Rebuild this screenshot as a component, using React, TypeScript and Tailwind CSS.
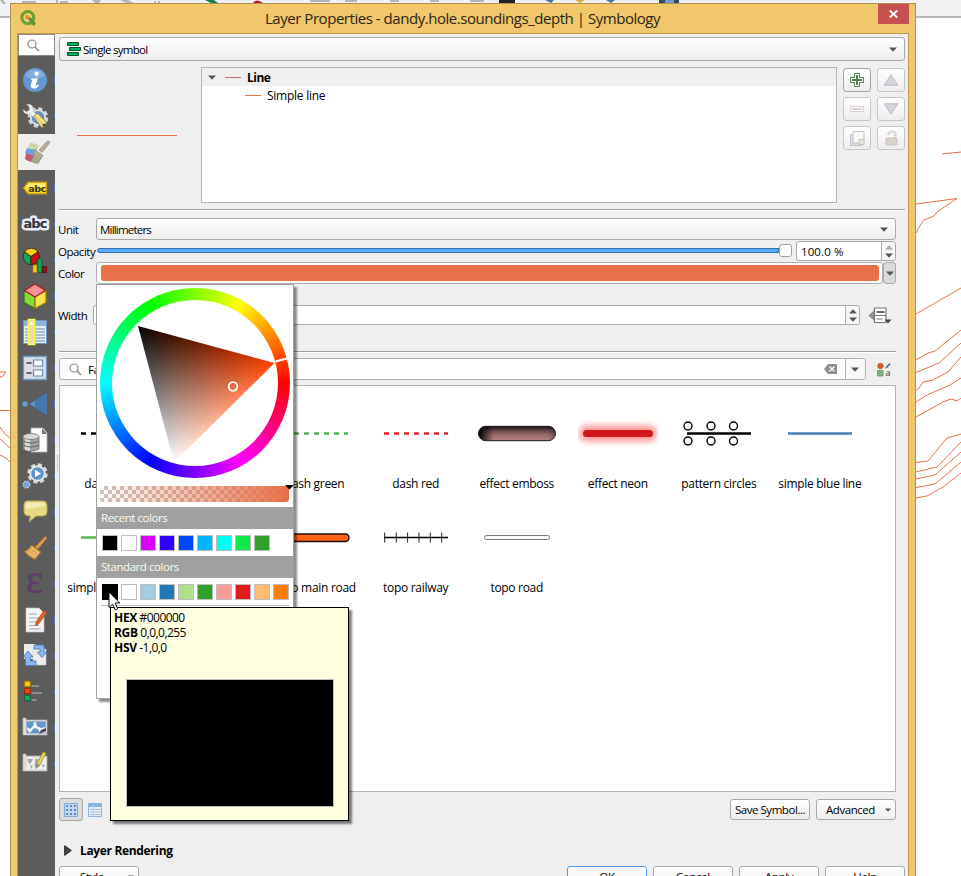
import React from "react";

const OUTLINE = "#e77148";

/* ---------- small shared pieces ---------- */

function Down({ color = "#555", w = 8 }: { color?: string; w?: number }) {
  return (
    <svg width={w} height={w / 2 + 1} viewBox="0 0 8 5" className="block shrink-0">
      <path d="M0 .5h8L4 4.8z" fill={color} />
    </svg>
  );
}

function Up({ color = "#555" }: { color?: string }) {
  return (
    <svg width="8" height="5" viewBox="0 0 8 5" className="block shrink-0">
      <path d="M0 4.500h8L4 .2z" fill={color} />
    </svg>
  );
}

function Magnifier() {
  return (
    <svg width="13" height="13" viewBox="0 0 13 13" fill="none" stroke="#8a8a8a" className="block shrink-0">
      <circle cx="5" cy="5" r="4" strokeWidth="1.2" />
      <path d="M8 8l4 4" strokeWidth="1.7" />
    </svg>
  );
}

function Rule() {
  return <div className="h-[2px] shrink-0 border-b border-white bg-[#a0a0a0]" />;
}

function ToolButton({ children, dim }: { children: React.ReactNode; dim?: boolean }) {
  return (
    <div
      className={
        "flex h-6 w-7 items-center justify-center rounded-[3px] border bg-linear-to-b from-white to-[#ededed] " +
        (dim ? "border-[#c6c6c6]" : "border-[#a4a4a4]")
      }
    >
      {children}
    </div>
  );
}

/* ---------- sidebar icons, 26 x 26 ---------- */

const sideIcons: React.ReactNode[] = [
  <g key="info">
    <circle cx="13" cy="13" r="12" fill="#6397cf" />
    <path d="M3 9a11 11 0 0 1 20 0q-10 6-20 0z" fill="#83aedb" />
    <circle cx="14.6" cy="6.8" r="2.2" fill="#fff" />
    <path d="M9.500 11.500h6.300l-2.300 7.300q1.500.2 2.500-1.600l1 .7q-2 4-5.600 3.600-3.400-.4-2.600-3.400l1.500-5H9z" fill="#fff" />
  </g>,
  <g key="wrench">
    <circle cx="16" cy="14.500" r="9" fill="none" stroke="#d6d6d6" strokeWidth="2.600" strokeDasharray="4.200 2.870" />
    <circle cx="16" cy="14.500" r="7.300" fill="#5f93c9" stroke="#e2e2e2" strokeWidth="1.800" />
    <path d="M4.500 1.500q6-1.500 7 4.500l-.5 2 5 4.500-3 3-5.500-4.500Q2 12 1 6.500l3.500 2.300 3-1.800-.5-3.500z" fill="#f0f0f0" stroke="#aaa" strokeWidth=".5" />
    <path d="M11.500 13.500l4-3.500 9 9.500-2 4-3 1z" fill="#f3e08a" stroke="#8d8146" strokeWidth="1" />
    <path d="M13.500 13.500l8 8.500" stroke="#c9b75a" strokeWidth="1" />
    <circle cx="22" cy="22" r="1.600" fill="#55502f" />
  </g>,
  <g key="brush">
    <path d="M8 3.500l9 2.500-2 5-9-2.500z" fill="#c8d8a0" />
    <path d="M5 9l10 2-2 6-10-3z" fill="#6ba3e3" />
    <path d="M4 14l9 3-1 6q-6 0-9-3z" fill="#c05a78" />
    <path d="M17 11L25 2.500q1.500-1 2.200 0t0 2L20 13.500z" fill="#b3ac98" stroke="#958e7a" strokeWidth=".7" />
    <path d="M12.500 10.500l8.500 6-5 8q-4 0-7-2.500 4-5 3.500-11.500z" fill="#b5ae9a" stroke="#938c78" strokeWidth=".7" />
    <path d="M13 16l-2 6.500M15.500 17.500l-2 6M18.500 18.500l-2.500 5" stroke="#938c78" strokeWidth=".8" />
  </g>,
  <g key="label">
    <path d="M1.500 13L6 7.200h18.500v11.600H6z" fill="#f6dc2c" stroke="#c79c08" strokeWidth="1.200" />
    <path d="M6.500 8.200h17v4h-19z" fill="#fcf08a" opacity=".7" />
    <text x="15" y="16.500" textAnchor="middle" fontSize="9.500" fontWeight="700" fontFamily="DejaVu Sans, sans-serif" letterSpacing="-.5" fill="#3b3630">abc</text>
  </g>,
  <g key="mask">
    <text x="13" y="17" textAnchor="middle" fontSize="13" fontWeight="700" fontFamily="DejaVu Sans, sans-serif" letterSpacing="-.9" fill="#2f3238" stroke="#e9ecfa" strokeWidth="5" strokeLinejoin="round" paintOrder="stroke">abc</text>
  </g>,
  <g key="diagram" stroke="#3a1d10" strokeWidth=".8" transform="translate(0 1)">
    <path d="M9 8.500L2.500 4A8 8 0 0 1 16 4z" fill="#f8d012" />
    <path d="M9 8.500L2.500 4A8 8 0 0 0 9 16.500z" fill="#0fa65a" />
    <path d="M9 8.500L16 4A8 8 0 0 1 9 16.500z" fill="#c41212" />
    <path d="M11 17h4v7.500h-4z" fill="#fbc51c" stroke="#b47a10" />
    <path d="M15.800 11h4v13.500h-4z" fill="#0fa65a" stroke="#075f35" />
    <path d="M20.600 18.500h4v6h-4z" fill="#a01010" stroke="#5a0505" />
  </g>,
  <g key="cube" strokeLinejoin="round" strokeWidth="1.300">
    <path d="M13 13.500v12L2 19.500V7.500z" fill="#87dc36" stroke="#3a7512" />
    <path d="M13 13.500v12l11-6V7.500z" fill="#f7e44a" stroke="#9a7f10" />
    <path d="M13 1l10.500 6.500L13 14 2.500 7.500z" fill="#f59393" stroke="#b01a22" />
  </g>,
  <g key="fields">
    <path d="M1.500 1.500h23v23h-23z" fill="#e3eef7" stroke="#6a99c6" />
    <path d="M2 2h22v5H2z" fill="#8db5da" />
    <path d="M3 10h20M3 13h20M3 16h20M3 19h20M3 22h20" stroke="#6b91b8" />
    <path d="M6.500 .5h6v25h-6z" fill="#e8dfa5" stroke="#fdf246" strokeWidth="1.700" />
    <circle cx="9.500" cy="4.500" r="1.400" fill="#fff" />
  </g>,
  <g key="form">
    <path d="M1.500 1.500h23v23h-23z" fill="#dcdfe4" stroke="#7398c4" strokeWidth="1.300" />
    <path d="M11.500 5h9v6h-9zM11.500 15h9v6h-9z" fill="#fff" stroke="#5f8abb" strokeWidth="1.200" />
    <path d="M4.500 8h5M4.500 18h5" stroke="#5d6570" strokeWidth="2" />
  </g>,
  <g key="join">
    <circle cx="3" cy="13" r="2.800" fill="#6b9bcf" />
    <path d="M7.500 13L25 2v22z" fill="#5f94cb" />
    <path d="M13 9.500L25 2v22l-12-7.500z" fill="#3a6ca4" opacity=".7" />
  </g>,
  <g key="aux">
    <path d="M9 1h12l4 5v19H9z" fill="#fbfbfb" stroke="#b5b5b5" strokeWidth=".8" />
    <path d="M20 1v6h5z" fill="#777" />
    <path d="M1 10v12q8 4 16 0V10z" fill="#a2a2a2" stroke="#6e6e6e" strokeWidth=".8" />
    <path d="M3 11v12q3 1 5 1V11z" fill="#dcdcdc" />
    <ellipse cx="9" cy="9.500" rx="8" ry="3" fill="#dadada" stroke="#777" strokeWidth=".8" />
    <path d="M1 14q8 4 16 0M1 18q8 4 16 0" fill="none" stroke="#666" />
  </g>,
  <g key="actions">
    <circle cx="15.500" cy="10.500" r="9" fill="none" stroke="#dadada" strokeWidth="2.500" strokeDasharray="4.200 2.870" />
    <circle cx="15.500" cy="10.500" r="7.300" fill="#5f93c9" stroke="#e8e8e8" strokeWidth="2" />
    <path d="M13 6.800v7.400l6-3.700z" fill="#fff" />
    <circle cx="4.500" cy="21.500" r="3.300" fill="#6ea6d8" stroke="#b7c9da" strokeWidth="1.400" strokeDasharray="1.700 .9" />
  </g>,
  <g key="display" transform="translate(0 -1)">
    <path d="M5 3h16q4 0 4 4v7q0 4-4 4h-7l-7 6 1.500-6Q2 18 2 14V7q0-4 3-4z" fill="#e6db86" stroke="#b7aa4d" />
    <path d="M5.500 4.500h15q3 0 3 3l-18 3.500-2-1V7q0-2.500 2-2.500z" fill="#f3ecb5" />
  </g>,
  <g key="rendering">
    <path d="M13 12.500L22.500 2q1.500-1 2 0t0 1.500L16 14z" fill="#e0a04a" stroke="#b37421" strokeWidth=".8" />
    <path d="M9.500 10l9.500 7-6 7.500Q6 22 2.500 16.500q5-2 7-6.500z" fill="#dfa355" stroke="#ad7326" strokeWidth=".9" />
    <path d="M6 17l7 5M8 15l7 5.500M10 13l7 5.500" stroke="#f2cf91" strokeWidth="1" />
  </g>,
  <g key="variables">
    <text x="12.500" y="21.500" textAnchor="middle" fontSize="40" fontFamily="Liberation Serif, serif" fill="#613c6b" stroke="#613c6b" strokeWidth=".7">ε</text>
  </g>,
  <g key="metadata">
    <path d="M4 1h13l5 5v19H4z" fill="#f4f4f4" stroke="#bdbdbd" strokeWidth=".7" />
    <path d="M7 7h8M7 11h10M7 15h9M7 18.500h10M7 22h12" stroke="#a9a9a9" />
    <path d="M22 3.500l3 2-8.500 11.500-3 1.500.8-4z" fill="#e0622a" stroke="#a34318" strokeWidth=".7" />
  </g>,
  <g key="dependencies">
    <path d="M2 1h11l3 3v12H2z" fill="#ececec" />
    <path d="M11 6h13v16H11z" fill="#ececec" stroke="#c9c9c9" strokeWidth=".6" />
    <path d="M12 2h10v7h3l-5 5.500-5-5.500h3V6h-6z" fill="#8db5f0" stroke="#4a78c0" strokeWidth=".8" />
    <path d="M6 8l5 6H8.500v4H14v4.500H3.500V14H1z" fill="#8db5f0" stroke="#4a78c0" strokeWidth=".8" />
  </g>,
  <g key="legend" transform="translate(0 -1)">
    <path d="M2.700 3.200h5.500v5.500H2.700z" fill="#fbd006" stroke="#a87a00" />
    <path d="M2.700 10.200h5.500v5.500H2.700z" fill="#f24a0c" stroke="#8f2500" />
    <path d="M2.700 17.200h5.500v5.500H2.700z" fill="#0fb05a" stroke="#075f2f" />
    <path d="M9.500 8h7.500M9.500 15h10.500M9.500 22h5" stroke="#9a9a9a" strokeWidth="1.600" />
  </g>,
  <g key="server" transform="translate(0 -1)">
    <path d="M1 4h3v2h21v15H1z" fill="#dedede" stroke="#b5b5b5" strokeWidth=".7" />
    <path d="M4.500 7.500H23.500v11.500H4.500z" fill="#f2f2f2" stroke="#8aa0b5" strokeWidth=".8" />
    <path d="M5 8h7l-1 4-3 3-3-2zM14 8h9v5l-4 1-4-2zM8 19l4-5 4 1 2 4zM5 15l2 4H5z" fill="#5f97cf" />
    <path d="M17 20l2-4 5-2v3z" fill="#4a4a4a" />
  </g>,
  <g key="digitizing" transform="translate(0 -1)">
    <path d="M1 4h3v2h21v15H1z" fill="#dedede" stroke="#b5b5b5" strokeWidth=".7" />
    <path d="M5 7.500h19v12H5z" fill="#efefef" />
    <path d="M5 9h6l-2 4-2 1zM13 9h4l-2 4 2 4-4-3zM20 14l3 1-2 3zM8 15l3 1-2 3z" fill="#a8a8a8" />
    <path d="M21 2l3 1-6.500 12.500-3 2 .7-4z" fill="#eadb57" stroke="#93882d" strokeWidth=".8" />
    <path d="M12 14l6 .5-4 5z" fill="#777" opacity=".6" />
  </g>,
];

function Sidebar() {
  return (
    <div className="flex w-[37px] shrink-0 flex-col bg-[#5c5c5c]">
      <div className="flex h-[22px] items-center border border-[#8b8b8b] bg-white pl-2">
        <Magnifier />
      </div>
      <div className="mt-[6px] flex flex-col">
        {sideIcons.map((icon, i) => (
          <div key={i} className={"flex h-9 items-center justify-between pl-1 " + (i === 2 ? "bg-[#efefef]" : "")}>
            <svg width="26" height="26" viewBox="0 0 26 26" className="block shrink-0 overflow-visible">
              {icon}
            </svg>
            {i !== 2 && <div className={"w-px bg-[#5376bd] " + (i % 3 === 0 ? "h-2" : "h-1")} />}
          </div>
        ))}
      </div>
    </div>
  );
}

/* ---------- symbol picker ---------- */

const symbols: { name: string; art: React.ReactNode }[] = [
  { name: "dash black", art: <path d="M8 40.500h64" stroke="#000" strokeWidth="2.600" strokeDasharray="5 5" /> },
  { name: "", art: null },
  { name: "dash green", art: <path d="M9 40.500h64" stroke="#4daf4a" strokeWidth="2.600" strokeDasharray="5 5" /> },
  { name: "dash red", art: <path d="M8 40.500h64" stroke="#e0222b" strokeWidth="2.600" strokeDasharray="5 5" /> },
  {
    name: "effect emboss",
    art: (
      <>
        <defs>
          <linearGradient id="em" x2="0" y2="1">
            <stop offset="0" stopColor="#140b0d" />
            <stop offset=".25" stopColor="#5a3f41" />
            <stop offset=".55" stopColor="#94696a" />
            <stop offset="1" stopColor="#b58182" />
          </linearGradient>
          <linearGradient id="em2">
            <stop offset="0" stopColor="#000" />
            <stop offset=".2" stopColor="#000" stopOpacity="0" />
            <stop offset=".9" stopColor="#000" stopOpacity="0" />
            <stop offset="1" stopColor="#000" stopOpacity=".3" />
          </linearGradient>
        </defs>
        <rect x="1.500" y="33.300" width="77" height="14.400" rx="7.200" fill="url(#em)" />
        <rect x="1.500" y="33.300" width="77" height="14.400" rx="7.200" fill="url(#em2)" stroke="#1c1c1c" />
      </>
    ),
  },
  {
    name: "effect neon",
    art: (
      <>
        <rect x="1" y="32.500" width="78" height="16" rx="8" fill="#ff2a2a" opacity=".5" className="blur-[3px]" />
        <rect x="5" y="37" width="70" height="7" rx="3.500" fill="#d0181b" />
      </>
    ),
  },
  {
    name: "pattern circles",
    art: (
      <g stroke="#000" fill="#fff">
        <path d="M8 40.500h64" strokeWidth="2.600" />
        {[9, 32, 54.500].map((x) => (
          <g key={x} strokeWidth="1.400">
            <circle cx={x} cy="33" r="4" />
            <circle cx={x} cy="48" r="4" />
          </g>
        ))}
      </g>
    ),
  },
  { name: "simple blue line", art: <path d="M8 40.500h64" stroke="#4a7fbb" strokeWidth="2.600" /> },
  { name: "simple green line", art: <path d="M8 40.500h64" stroke="#5bb353" strokeWidth="2.600" /> },
  { name: "", art: null },
  { name: "topo main road", art: <rect x="3" y="37" width="71" height="7.500" rx="3.700" fill="#ff6314" stroke="#1c0f08" strokeWidth="1.400" /> },
  {
    name: "topo railway",
    art: (
      <g stroke="#222">
        <path d="M8 40.500h64" strokeWidth="1.600" stroke="#000" />
        <path d="M8.700 35.500v10M20.300 35.500v10M31.600 35.500v10M43 35.500v10M54.300 35.500v10M65.700 35.500v10" />
      </g>
    ),
  },
  { name: "topo road", art: <rect x="7.500" y="38.500" width="65" height="4" rx="1.800" fill="#fff" stroke="#777" /> },
];

function SymbolList() {
  return (
    <div className="mt-[5px] h-[407px] shrink-0 border border-[#b4b4b4] bg-white pt-[7px] pl-[2px]">
      <div className="grid grid-cols-[repeat(8,101.05px)] text-[12px] tracking-[-0.3px]">
        {symbols.map((s, i) => (
          <div key={i} className="flex h-[104px] flex-col items-center">
            <svg width="80" height="80" viewBox="0 0 80 80" className="block shrink-0">
              {s.art}
            </svg>
            <span className="mt-[3px] leading-4 whitespace-nowrap">{s.name}</span>
          </div>
        ))}
      </div>
    </div>
  );
}

/* ---------- colour menu ---------- */

type P = [number, number];
const HUE: P = [177.5, 78];
const BLACK: P = [41, 41];
const WHITE: P = [77, 177.5];

/* Foot of the perpendicular from p on the edge a-b. */
function foot(p: P, a: P, b: P): P {
  const dx = b[0] - a[0];
  const dy = b[1] - a[1];
  const t = ((p[0] - a[0]) * dx + (p[1] - a[1]) * dy) / (dx * dx + dy * dy);
  return [a[0] + t * dx, a[1] + t * dy];
}

function Wheel() {
  const h = foot(HUE, BLACK, WHITE);
  const w = foot(WHITE, BLACK, HUE);
  const pts = [HUE, BLACK, WHITE].map((p) => p.join(",")).join(" ");
  return (
    <div className="relative h-[200px] w-[196px] shrink-0">
      <div className="absolute top-[3px] left-[3px] h-[190px] w-[190px] rounded-full bg-[conic-gradient(from_90deg,#f00,#f0f,#00f,#0ff,#0f0,#ff0,#f00)]" />
      <div className="absolute top-[15px] left-[15px] h-[166px] w-[166px] rounded-full bg-white" />
      <svg width="196" height="200" viewBox="0 0 196 200" className="absolute top-0 left-0">
        <defs>
          <clipPath id="tri">
            <polygon points={pts} />
          </clipPath>
          <linearGradient id="gh" gradientUnits="userSpaceOnUse" x1={h[0]} y1={h[1]} x2={HUE[0]} y2={HUE[1]}>
            <stop offset="0" stopColor="#000" />
            <stop offset="1" stopColor="#ff4200" />
          </linearGradient>
          <linearGradient id="gw" gradientUnits="userSpaceOnUse" x1={w[0]} y1={w[1]} x2={WHITE[0]} y2={WHITE[1]}>
            <stop offset="0" stopColor="#000" />
            <stop offset="1" stopColor="#fff" />
          </linearGradient>
        </defs>
        <g clipPath="url(#tri)" className="isolate">
          <rect x="30" y="30" width="155" height="155" fill="url(#gh)" />
          <rect x="30" y="30" width="155" height="155" fill="url(#gw)" className="mix-blend-plus-lighter" />
        </g>
        <path d="M178.500 76.500l12-3.300" stroke="#fff" strokeWidth="2" />
        <circle cx="136" cy="101.500" r="4.300" fill="none" stroke="#fff" strokeWidth="1.800" />
      </svg>
    </div>
  );
}

function Swatches({ colors, active }: { colors: string[]; active?: boolean }) {
  return (
    <div className="flex gap-[3px] pl-[5px]">
      {colors.map((c, i) => (
        <div
          key={c}
          className={"h-4 w-4 border " + (active && i === 0 ? "border-black" : "border-[#bdbdbd]")}
          style={{ backgroundColor: c }}
        />
      ))}
    </div>
  );
}

const menuHeading =
  "h-[22px] shrink-0 bg-[#a0a0a0] pl-1 text-[11.5px] leading-[22px] tracking-[-0.45px] text-[#fcfcf0]";

function ColorMenu() {
  return (
    <div className="absolute top-[284px] left-[96px] flex h-[415px] w-[198px] flex-col border border-[#a0a0a0] bg-white shadow-[3px_3px_2px_rgba(0,0,0,0.45)]">
      <Wheel />
      <div className="relative mt-[1px] ml-[3px] h-4 w-[189px] rounded-[3px] bg-[linear-gradient(90deg,rgba(231,113,72,0),#e77148),repeating-conic-gradient(#cbc3c1_0_25%,#fff_0_50%)] bg-[size:100%_100%,8px_8px]">
        <svg width="9" height="5" viewBox="0 0 9 5" className="absolute -top-px left-[185px]">
          <path d="M0 0h9L4.500 4.500z" fill="#000" />
        </svg>
      </div>
      <div className={menuHeading + " mt-[5px]"}>Recent colors</div>
      <div className="mt-[6px]">
        <Swatches colors={["#000000", "#ffffff", "#d900ff", "#2f00ff", "#0048ff", "#00b7ff", "#00fff0", "#11e846", "#33a02c"]} />
      </div>
      <div className={menuHeading + " mt-[5px]"}>Standard colors</div>
      <div className="mt-[6px]">
        <Swatches active colors={["#000000", "#ffffff", "#a6cee3", "#1f78b4", "#b2df8a", "#33a02c", "#fb9a99", "#e31a1c", "#fdbf6f", "#ff7f00"]} />
      </div>
      <div className="mx-1 mt-[5px] h-px bg-[#c0c0c0]" />
    </div>
  );
}

function ColorTip() {
  const rows = [
    ["HEX", "#000000"],
    ["RGB", "0,0,0,255"],
    ["HSV", "-1,0,0"],
  ];
  return (
    <div className="absolute top-[607px] left-[110px] flex h-[214px] w-[239px] flex-col border border-black bg-[#ffffe1] pt-[2px] text-[12px] tracking-[-0.55px] shadow-[3px_3px_2px_rgba(0,0,0,0.5)]">
      {rows.map(([k, v]) => (
        <div key={k} className="h-[15px] pl-[3px] leading-[15px]">
          <b className="tracking-[-0.3px]">{k}</b> {v}
        </div>
      ))}
      <div className="mt-[24px] ml-[15px] h-[128px] w-[208px] border border-[#bdbdbd] bg-black" />
    </div>
  );
}

/* ---------- form ---------- */

function SymbolTree() {
  return (
    <div className="mt-[6px] flex h-[136px] shrink-0">
      <div className="flex w-[142px] items-center pl-[18px]">
        <div className="h-px w-[100px] bg-[#e77148]" />
      </div>
      <div className="w-[636px] border border-[#b4b4b4] bg-white text-[12px]">
        <div className="flex h-[18px] items-center bg-[#efefef] pl-[6px]">
          <Down />
          <div className="ml-[9px] h-px w-4 bg-[#bb7070]" />
          <b className="mt-[2px] ml-[6px] leading-4 tracking-[-0.5px]">Line</b>
        </div>
        <div className="flex h-[18px] items-center pl-[43px]">
          <div className="h-px w-4 bg-[#e77148]" />
          <span className="mt-[2px] ml-[6px] leading-4 tracking-[-0.25px]">Simple line</span>
        </div>
      </div>
      <div className="ml-[6px] grid content-start gap-x-[6px] gap-y-[5px] pt-px [grid-template-columns:28px_28px]">
        <ToolButton>
          <svg width="14" height="14" viewBox="0 0 14 14">
            <path d="M4.500.500h5v4h4v5h-4v4h-5v-4h-4v-5h4z" fill="#fff" stroke="#4d8050" />
            <path d="M6 2h2v4h4v2H8v4H6V8H2V6h4z" fill="#4d8050" />
          </svg>
        </ToolButton>
        <ToolButton dim>
          <svg width="16" height="12" viewBox="0 0 16 12">
            <path d="M8 .8l6.800 10.400H1.200z" fill="#d3d6da" stroke="#b9bdc1" />
          </svg>
        </ToolButton>
        <ToolButton dim>
          <svg width="14" height="6" viewBox="0 0 14 6">
            <path d="M.5.500h13v5H.5z" fill="#fff" stroke="#dccfcf" />
            <path d="M2 2h10v2H2z" fill="#ddd0d0" />
          </svg>
        </ToolButton>
        <ToolButton dim>
          <svg width="16" height="12" viewBox="0 0 16 12">
            <path d="M8 11.200L14.800.8H1.200z" fill="#d3d6da" stroke="#b9bdc1" />
          </svg>
        </ToolButton>
        <ToolButton dim>
          <svg width="15" height="15" viewBox="0 0 15 15" stroke="#c4c4c4">
            <path d="M.5 3.500h11v11H.5z" fill="#dedede" />
            <path d="M3 .5h11v11.500H3z" fill="#f6f6f6" />
            <path d="M9 8.500h5v5H9z" fill="#e6e3d8" stroke="#c9c7bb" />
          </svg>
        </ToolButton>
        <ToolButton dim>
          <svg width="13" height="16" viewBox="0 0 13 16">
            <path d="M3 4.500Q4 1.500 7 1.500q3.500 0 3.500 3.500v3" fill="none" stroke="#d0d0d0" strokeWidth="2.400" strokeDasharray="2.500 .6" />
            <rect x="1" y="8" width="11" height="7" rx="1.500" fill="#d9d6c9" stroke="#c6c3b5" />
          </svg>
        </ToolButton>
      </div>
    </div>
  );
}

function Spin({ upColor = "#555" }: { upColor?: string }) {
  return (
    <div className="flex w-[14px] flex-col items-center justify-center gap-[3px] rounded-r-[3px] border-l border-[#b0b0b0] bg-[#f6f6f6]">
      <Up color={upColor} />
      <Down />
    </div>
  );
}

const button =
  "flex items-center justify-center rounded-[3px] border border-[#a9a9a9] bg-linear-to-b from-white to-[#ededed] whitespace-nowrap";

function Form() {
  return (
    <div className="flex w-[853px] shrink-0 flex-col bg-[#efefef] pt-[3px] pr-[3px] pl-[4px] text-[12px] text-black">
      <div className={button + " h-6 shrink-0 !justify-start pr-[7px] pl-[7px]"}>
        <svg width="14" height="15" viewBox="0 0 14 15" fill="#00b35a" stroke="#07532d">
          <path d="M.5.500h11v3H.5zM2.500 5.500h11v3h-11zM.5 10.500h11v3H.5z" />
        </svg>
        <span className="ml-[2px] flex-1 pt-px text-[11.5px] tracking-[-0.7px]">Single symbol</span>
        <Down />
      </div>

      <SymbolTree />
      <div className="mt-[6px]"><Rule /></div>

      <div className="mr-[9px] flex flex-col text-[11.5px] tracking-[-0.5px]">
        <div className="mt-[7px] flex h-[22px] items-center">
          <span className="-ml-px w-[38px] pt-0.5">Unit</span>
          <div className={button + " h-[22px] flex-1 !justify-start pr-[7px] pl-[3px]"}>
            <span className="flex-1 pt-0.5 tracking-[-0.8px]">Millimeters</span>
            <Down />
          </div>
        </div>
        <div className="mt-px flex h-5 items-center">
          <span className="-ml-px w-[39px] pt-0.5">Opacity</span>
          <div className="flex w-[695px] items-center">
            <div className="mb-px h-[5px] flex-1 rounded-l-sm border border-[#2a70b4] bg-[#5daaf8]" />
            <div className="mb-px h-[13px] w-[13px] rounded-[3px] border border-[#a0a0a0] bg-white" />
          </div>
          <div className="ml-1 flex h-5 w-[100px] rounded-[3px] border border-[#a9a9a9] bg-white">
            <span className="flex-1 pl-1 leading-[20px] tracking-[0.1px]">100.0 %</span>
            <Spin upColor="#aaa" />
          </div>
        </div>
        <div className="mt-px flex h-[22px] items-center">
          <span className="-ml-px w-[38px] pt-px">Color</span>
          <div className="flex h-[22px] flex-1 rounded-[3px] border border-[#b0b0b0] bg-[#fafafa] py-[2px] pr-[3px] pl-[4px]">
            <div className="flex-1 rounded-[3px] bg-[#e77148]" />
          </div>
          <div className="flex h-[22px] w-[13px] items-center justify-center rounded-[3px] border border-[#a9a9a9] bg-[#dadada]">
            <Down />
          </div>
        </div>
        <div className="mt-[21px] flex h-5 items-center">
          <span className="-ml-px w-[35px] pt-0.5">Width</span>
          <div className="flex h-5 w-[767px] justify-end rounded-[3px] border border-[#a9a9a9] bg-white">
            <Spin />
          </div>
          <svg width="24" height="17" viewBox="0 0 24 17" className="ml-[9px]">
            <path d="M0 8.500L6 3v11z" fill="#8e9297" stroke="#6b6b6b" strokeWidth=".7" />
            <path d="M5.500 1h11.500v14.500H5.500z" fill="#fff" stroke="#777" strokeWidth="1.200" />
            <path d="M7.500 5h8" stroke="#444" strokeWidth="1.600" />
            <path d="M6 8.500h11M7.500 12h6" stroke="#777" />
            <path d="M15.500 12.500h7l-3.500 4z" fill="#444" />
          </svg>
        </div>
        <div className="mt-[26px]"><Rule /></div>
        <div className="mt-[5px] flex h-[22px] items-center">
          <div className="flex h-[22px] w-[807px] items-center rounded-[3px] border border-[#b0b0b0] bg-white">
            <div className="ml-[9px]"><Magnifier /></div>
            <span className="ml-[6px] flex-1 pt-0.5">Favorites</span>
            <svg width="13" height="10" viewBox="0 0 13 10">
              <path d="M0 5l4-5h9v10H4z" fill="#8f8f8f" />
              <path d="M5.500 2.500l5 5M10.500 2.500l-5 5" stroke="#fff" strokeWidth="1.200" />
            </svg>
            <div className="ml-[8px] flex h-5 w-5 items-center justify-center rounded-r-[3px] border-l border-[#b0b0b0] bg-[#f8f8f8] pr-[2px]">
              <Down />
            </div>
          </div>
          <svg width="15" height="15" viewBox="0 0 15 15" className="ml-[10px]">
            <circle cx="4.500" cy="4" r="2.800" fill="#d1622c" stroke="#a9481b" strokeWidth=".6" />
            <path d="M9 6.500l1-2L13.500 1l1.200 1.200L11.200 6z" fill="#4a74a8" />
            <path d="M1.500 8.500H7v5.500H1.500z" fill="#7fb185" stroke="#5a8f62" strokeWidth=".7" />
            <text x="9.500" y="14" fontSize="9" fontFamily="Open Sans, sans-serif" fill="#333">a</text>
          </svg>
        </div>
        <SymbolList />
        <div className="mt-[6px] flex h-[23px] items-center">
          <div className="flex h-[23px] w-6 items-center justify-center rounded-[3px] border border-[#a6a6a6] bg-[#dcdcdc]">
            <svg width="14" height="14" viewBox="0 0 14 14" fill="#5d8cc4">
              <path d="M.5.500h13v13H.5z" fill="#c3d6ec" stroke="#86aad4" />
              {[2, 6, 10].map((y) =>
                [2, 6, 10].map((x) => <rect key={x + "-" + y} x={x} y={y} width="2" height="2" />)
              )}
            </svg>
          </div>
          <svg width="14" height="14" viewBox="0 0 14 14" className="ml-[5px]">
            <path d="M.5.500h13v13H.5z" fill="#e4eff8" stroke="#8fb6da" />
            <path d="M.5.500h13v3.500H.5z" fill="#86b2dc" />
            <path d="M2 6.500h3M6.500 6.500h6M2 9h3M6.500 9h6M2 11.500h3M6.500 11.500h6" stroke="#a9bdd0" />
            <path d="M5.500 1v12" stroke="#b4cfe6" />
          </svg>
          <div className="flex-1" />
          <div className={button + " h-[21px] w-20 pt-px tracking-[-0.45px]"}>Save Symbol...</div>
          <div className={button + " ml-[6px] h-[21px] w-20 !justify-start pt-px pl-[9px] tracking-[-0.45px]"}>
            <span className="flex-1">Advanced</span>
            <span className="mr-1"><Down w={6} /></span>
          </div>
        </div>
      </div>

      <div className="mt-5 flex h-[18px] shrink-0 items-center pl-[5px]">
        <svg width="8" height="11" viewBox="0 0 8 11">
          <path d="M.7.700v9.600L7.300 5.500z" fill="#444" stroke="#222" />
        </svg>
        <b className="ml-2 pt-px tracking-[-0.35px]">Layer Rendering</b>
      </div>
      <div className="mt-[7px] flex shrink-0 gap-[6px] text-[11.5px] tracking-[-0.3px]">
        <div className={button + " h-[22px] w-20 !justify-start pl-5"}>
          <span className="flex-1">Style</span>
          <span className="mr-1"><Down w={6} /></span>
        </div>
        <div className="flex-1" />
        <div className={button + " h-[22px] w-20 !border-[#4d9be8]"}>OK</div>
        <div className={button + " h-[22px] w-20"}>Cancel</div>
        <div className={button + " h-[22px] w-20"}>Apply</div>
        <div className={button + " h-[22px] w-20"}>Help</div>
      </div>
    </div>
  );
}

/* ---------- main window behind the dialog ---------- */

function MapCanvas() {
  return (
    <svg width="961" height="876" viewBox="0 0 961 876" className="absolute top-0 left-0">
      <path d="M0 0h961v16H0z" fill="#f1f1f1" />
      <path d="M0 16h961v2H0z" fill="#b9b9b9" />
      <g fill="#b5b5b5">
        <path d="M0 0h3l3 4H3zM22 1h14v2H22zM56 0h2v3h-2zM60 1h8v2h-8zM92 0h9l-2 3h-4zM120 0h8l6 3h-8zM154 1h2v2h-2zM158 1h2v2h-2z" />
        <path d="M310 0h20v2h-20zM345 0h12v2h-12zM390 0h9v2h-9zM430 0h9v2h-9zM470 0h14v2h-14z" />
      </g>
      <path d="M205 0h9l4 3h-7z" fill="#12844a" />
      <path d="M253 3q4-5 10 0z" fill="#b5202c" />
      <path d="M499 0h16v3h-16z" fill="#222" />
      <path d="M545 0h9l-3 3zM606 0h9l-4 3z" fill="#4673a8" />
      <path d="M575 0h10l-5 3z" fill="#d0b23c" />
      <path d="M659 0h20v3h-20z" fill="#33485f" />
      <path d="M665 0h9v3h-9z" fill="#6d9ad0" />
      <g fill="none" stroke={OUTLINE} strokeWidth="1">
        <path d="M942 154l19-2M916 204l41-5.500-20 13.500-3 4-10 4-3 4-5 9M916 314l45-26" />
        <path d="M916 360l12-7 7-2 26-21M916 372.500l23-9.500 22-20M916 390.500l3-2.500 4-6 10-2 15-8 13-15" />
        <path d="M916 402l11-7 23-10 11-7M916 417l27-15 8-3 6 2 4-3M916 462.500l12-1.500 19-23 14-4" />
        <path d="M916 472l21-5 24-25M916 479l19-4 26-23M916 487.500l19-3.500 26-22M916 498l11-2 16-9 18-14" />
        <path d="M0 372h6l-3 4-3 1M0 410.500h10M0 427l5 7 5 4M0 439l10 9M0 455l6 3 4 4" />
      </g>
    </svg>
  );
}

function Logo() {
  return (
    <svg width="17" height="17" viewBox="0 0 17 17">
      <circle cx="7.800" cy="7.600" r="5.800" fill="none" stroke="#6fa02c" strokeWidth="3.400" />
      <circle cx="7.800" cy="7.600" r="4.300" fill="#f3d28a" />
      <path d="M8 7.600L10.500 7l5.500 6.500-2.500 2.500L8.500 10z" fill="#5a9336" />
      <circle cx="7.300" cy="7.200" r="2.200" fill="#ee8a1d" />
    </svg>
  );
}

export default function App() {
  return (
    <div className="relative h-[876px] w-[961px] overflow-hidden bg-white font-['Open_Sans','Noto_Sans',sans-serif] text-black">
      <MapCanvas />
      <div className="absolute top-[3px] left-[10px] flex h-[890px] w-[906px] flex-col border border-[#ae9047] bg-[#f0c76a]">
        <div className="flex h-[29px] shrink-0">
          <div className="w-[64px] pt-[6px] pl-[9px]"><Logo /></div>
          <div className="flex-1 pl-[190px] text-[15px] leading-[29px] tracking-[-0.46px] whitespace-nowrap text-[#2c2618]">
            Layer Properties - dandy.hole.soundings_depth | Symbology
          </div>
          <div className="mr-[6px] flex h-5 w-[31px] items-center justify-center bg-[#c75050]">
            <svg width="9" height="8" viewBox="0 0 9 8" stroke="#fff" strokeWidth="1.800">
              <path d="M.8.500l7.400 7M8.200.500L.8 7.500" />
            </svg>
          </div>
        </div>
        <div className="ml-[6px] flex w-[892px] flex-1 border border-b-0 border-[#bb9b50]">
          <Sidebar />
          <Form />
        </div>
      </div>
      <div className="absolute top-[455px] left-[57px] h-4 w-0 border-l border-dotted border-[#aaa]" />
      <ColorMenu />
      <ColorTip />
      <svg width="13" height="20" viewBox="0 0 13 20" className="absolute top-[591px] left-[108px]">
        <path d="M1 1v15.500l3.600-3.400 2.500 5.700 2.500-1.100L7.200 12h4.600z" fill="#fff" stroke="#111" />
      </svg>
    </div>
  );
}
